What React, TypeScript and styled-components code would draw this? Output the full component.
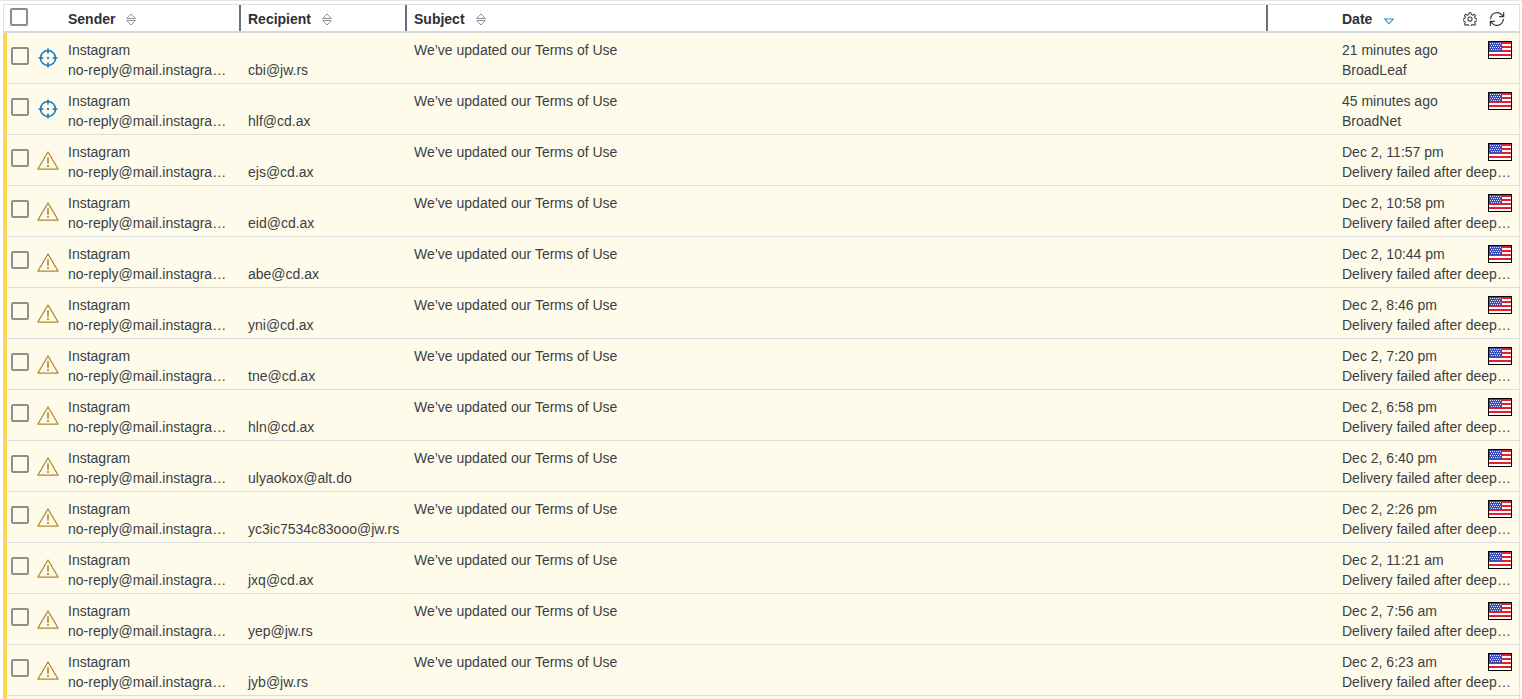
import styled, { createGlobalStyle } from "styled-components";

const HEADER_COLUMNS = "56px 179px 166px 861px 1fr";
const ROW_COLUMNS = "54px 180px 166px 861px 1fr";
const FAILED = "Delivery failed after deep scan";

const rows = [
  { kind: "target", to: "cbi@jw.rs", date: "21 minutes ago", status: "BroadLeaf" },
  { kind: "target", to: "hlf@cd.ax", date: "45 minutes ago", status: "BroadNet" },
  { kind: "warn", to: "ejs@cd.ax", date: "Dec 2, 11:57 pm", status: FAILED },
  { kind: "warn", to: "eid@cd.ax", date: "Dec 2, 10:58 pm", status: FAILED },
  { kind: "warn", to: "abe@cd.ax", date: "Dec 2, 10:44 pm", status: FAILED },
  { kind: "warn", to: "yni@cd.ax", date: "Dec 2, 8:46 pm", status: FAILED },
  { kind: "warn", to: "tne@cd.ax", date: "Dec 2, 7:20 pm", status: FAILED },
  { kind: "warn", to: "hln@cd.ax", date: "Dec 2, 6:58 pm", status: FAILED },
  { kind: "warn", to: "ulyaokox@alt.do", date: "Dec 2, 6:40 pm", status: FAILED },
  { kind: "warn", to: "yc3ic7534c83ooo@jw.rs", date: "Dec 2, 2:26 pm", status: FAILED },
  { kind: "warn", to: "jxq@cd.ax", date: "Dec 2, 11:21 am", status: FAILED },
  { kind: "warn", to: "yep@jw.rs", date: "Dec 2, 7:56 am", status: FAILED },
  { kind: "warn", to: "jyb@jw.rs", date: "Dec 2, 6:23 am", status: FAILED },
];

const GlobalStyle = createGlobalStyle`
  html, body {
    margin: 0;
    height: 699px;
    overflow: hidden;
    background: #ffffff;
    font-family: "Liberation Sans", Arial, sans-serif;
    color: #3a3f44;
  }
`;

function SortIcon() {
  return (
    <svg width="10" height="13" viewBox="0 0 10 13" fill="none" stroke="#8d9399" strokeWidth="1">
      <path d="M.7 5.500 5 1 9.300 5.500Z" />
      <path d="M.7 7.500 5 12 9.300 7.500Z" />
    </svg>
  );
}

function SortDownIcon() {
  return (
    <svg width="10" height="7" viewBox="0 0 10 7" fill="none" stroke="#1f8fd6" strokeWidth="1.1">
      <path d="M.7 1h8.600L5 5.800Z" />
    </svg>
  );
}

function GearIcon() {
  return (
    <svg width="14" height="14" viewBox="0 0 24 24" fill="none" stroke="#3f4448" strokeWidth="1.800" strokeLinejoin="round">
      <path d="M10.300 1.500h3.400l.6 3 2.300 1 2.600-1.700 2.400 2.400-1.700 2.600 1 2.300 3 .6v3.400l-3 .6-1 2.300 1.700 2.600-2.400 2.400-2.600-1.700-2.300 1-.6 3h-3.400l-.6-3-2.300-1-2.600 1.700-2.400-2.400 1.700-2.600-1-2.300-3-.6v-3.400l3-.6 1-2.300-1.700-2.600 2.400-2.400 2.600 1.700 2.300-1z" />
      <circle cx="12" cy="12" r="3.600" />
    </svg>
  );
}

function RefreshIcon() {
  return (
    <svg width="16" height="16" viewBox="0 0 24 24" fill="none" stroke="#33383c" strokeWidth="1.800" strokeLinecap="round" strokeLinejoin="round">
      <path d="M2.500 11.500A9.500 9.500 0 0 1 19 5.500l2.500 2.700" />
      <path d="M22 2.500v6h-6" />
      <path d="M21.500 12.500A9.500 9.500 0 0 1 5 18.500l-2.500-2.700" />
      <path d="M2 21.500v-6h6" />
    </svg>
  );
}

function TargetIcon() {
  return (
    <svg width="20" height="20" viewBox="0 0 20 20" fill="none" stroke="#1479bd" strokeWidth="1.600">
      <circle cx="10" cy="10" r="7.500" />
      <path d="M10 .5v5M10 14.500v5M.5 10h5M14.500 10h5" />
      <circle cx="10" cy="10" r=".4" />
    </svg>
  );
}

function WarnIcon() {
  return (
    <svg width="24" height="21" viewBox="0 0 24 21" fill="none" stroke="#b1872f" strokeWidth="1.400" strokeLinejoin="round">
      <path d="M12 1.200 23 19.800H1Z" />
      <path d="M12 7v7" strokeWidth="1.800" />
      <path d="M12 15.500v2" strokeWidth="1.800" />
    </svg>
  );
}

function FlagIcon() {
  return (
    <svg width="24" height="18" viewBox="0 0 24 18" shapeRendering="crispEdges">
      <rect width="24" height="18" fill="#000" />
      <rect x="1" y="1" width="22" height="16" fill="#fff" />
      <path d="M1 1h22v2H1zM1 5h22v2H1zM1 9h22v2H1zM1 13h22v2H1z" fill="#e2202c" />
      <rect x="1" y="1" width="13" height="9" fill="#3b4cb8" />
      <path d="M2 2h1v1H2zM4 2h1v1H4zM6 2h1v1H6zM8 2h1v1H8zM10 2h1v1h-1zM12 2h1v1h-1zM3 4h1v1H3zM5 4h1v1H5zM7 4h1v1H7zM9 4h1v1H9zM11 4h1v1h-1zM2 6h1v1H2zM4 6h1v1H4zM6 6h1v1H6zM8 6h1v1H8zM10 6h1v1h-1zM12 6h1v1h-1zM3 8h1v1H3zM5 8h1v1H5zM7 8h1v1H7zM9 8h1v1H9zM11 8h1v1h-1z" fill="#dfe4ff" />
    </svg>
  );
}

function App() {
  return (
    <>
      <GlobalStyle />
      <S.Page>
        <S.Table>
          <S.HeaderRow>
            <S.SelectCell>
              <S.Checkbox />
            </S.SelectCell>
            <S.HeaderCell>
              Sender <SortIcon />
            </S.HeaderCell>
            <S.HeaderCell $divided>
              Recipient <SortIcon />
            </S.HeaderCell>
            <S.HeaderCell $divided>
              Subject <SortIcon />
            </S.HeaderCell>
            <S.DateHeader>
              <S.DateLabel>
                Date <SortDownIcon />
              </S.DateLabel>
              <S.Tools>
                <GearIcon />
                <RefreshIcon />
              </S.Tools>
            </S.DateHeader>
          </S.HeaderRow>
          {rows.map((row) => (
            <S.Row key={row.to}>
              <S.RowLead>
                <S.RowCheckbox />
                <S.KindIcon>{row.kind === "target" ? <TargetIcon /> : <WarnIcon />}</S.KindIcon>
              </S.RowLead>
              <S.Cell>
                <S.Line>Instagram</S.Line>
                <S.Line>no-reply@mail.instagram.com</S.Line>
              </S.Cell>
              <S.RecipientCell>{row.to}</S.RecipientCell>
              <S.SubjectCell>We’ve updated our Terms of Use</S.SubjectCell>
              <S.DateCell>
                <S.DateTop>
                  <S.Line>{row.date}</S.Line>
                  <S.FlagBox>
                    <FlagIcon />
                  </S.FlagBox>
                </S.DateTop>
                <S.Line>{row.status}</S.Line>
              </S.DateCell>
            </S.Row>
          ))}
          <S.Row />
        </S.Table>
      </S.Page>
    </>
  );
}

const S = {
  Page: styled.div`
    padding: 3px 2px 0 3px;
    height: 699px;
    overflow: hidden;
    box-sizing: border-box;
    border-top: 1px solid #e4e6e8;
  `,
  Table: styled.div`
    display: flex;
    flex-direction: column;
    font-size: 14px;
    line-height: 20px;
  `,
  HeaderRow: styled.div`
    display: grid;
    grid-template-columns: ${HEADER_COLUMNS};
    flex: none;
    height: 29px;
    box-sizing: border-box;
    border-top: 1px solid #dde1e5;
    border-right: 1px solid #dde1e5;
    border-left: 1px solid #dde1e5;
    border-bottom: 2px solid #d6d9dc;
    align-items: stretch;
    font-weight: bold;
    color: #2d3135;
  `,
  SelectCell: styled.div`
    display: flex;
    align-items: center;
    padding-left: 6px;
  `,
  Checkbox: styled.span`
    display: block;
    width: 18px;
    height: 18px;
    box-sizing: border-box;
    border: 2px solid #8c8c8c;
    border-radius: 2px;
    background: #fff;
    margin-top: -2px;
  `,
  HeaderCell: styled.div<{ $divided?: boolean }>`
    display: flex;
    align-items: center;
    gap: 11px;
    padding: 2px 0 0 ${(p) => (p.$divided ? "9px" : "8px")};
    box-shadow: ${(p) => (p.$divided ? "inset 2px 0 0 #67727e" : "none")};
    white-space: nowrap;
  `,
  DateHeader: styled.div`
    display: flex;
    align-items: center;
    justify-content: space-between;
    padding: 2px 14px 0 76px;
    box-shadow: inset 2px 0 0 #67727e;
  `,
  DateLabel: styled.div`
    display: flex;
    align-items: center;
    gap: 12px;

    svg {
      margin-top: 5px;
    }
  `,
  Tools: styled.div`
    display: flex;
    align-items: center;
    gap: 12px;
  `,
  Row: styled.div`
    display: grid;
    grid-template-columns: ${ROW_COLUMNS};
    flex: none;
    height: 51px;
    box-sizing: border-box;
    background: #fffbeb;
    border-left: 4px solid #fdd54f;
    border-right: 1px solid #dde1e5;
    border-bottom: 1px solid #d8dcdf;
    color: #3a3f44;
  `,
  RowLead: styled.div`
    display: flex;
    align-items: center;
    gap: 8px;
    padding: 0 0 4px 4px;
  `,
  RowCheckbox: styled.span`
    display: block;
    flex: none;
    width: 18px;
    height: 18px;
    box-sizing: border-box;
    border: 2px solid #8f8f8f;
    border-radius: 2px;
    background: #fffbeb;
  `,
  KindIcon: styled.span`
    display: flex;
    justify-content: center;
    width: 22px;
    flex: none;
    margin-top: 4px;
  `,
  Cell: styled.div`
    min-width: 0;
    padding: 7px 14px 0 7px;
  `,
  Line: styled.div`
    overflow: hidden;
    white-space: nowrap;
    text-overflow: ellipsis;
  `,
  RecipientCell: styled.div`
    padding: 27px 0 0 7px;
    white-space: nowrap;
  `,
  SubjectCell: styled.div`
    padding: 7px 0 0 7px;
  `,
  DateCell: styled.div`
    min-width: 0;
    padding: 7px 7px 0 74px;
  `,
  DateTop: styled.div`
    display: flex;
    justify-content: space-between;
    height: 20px;
  `,
  FlagBox: styled.span`
    display: block;
    flex: none;
    margin-top: 1px;
    height: 18px;
  `,
};

export default App;
